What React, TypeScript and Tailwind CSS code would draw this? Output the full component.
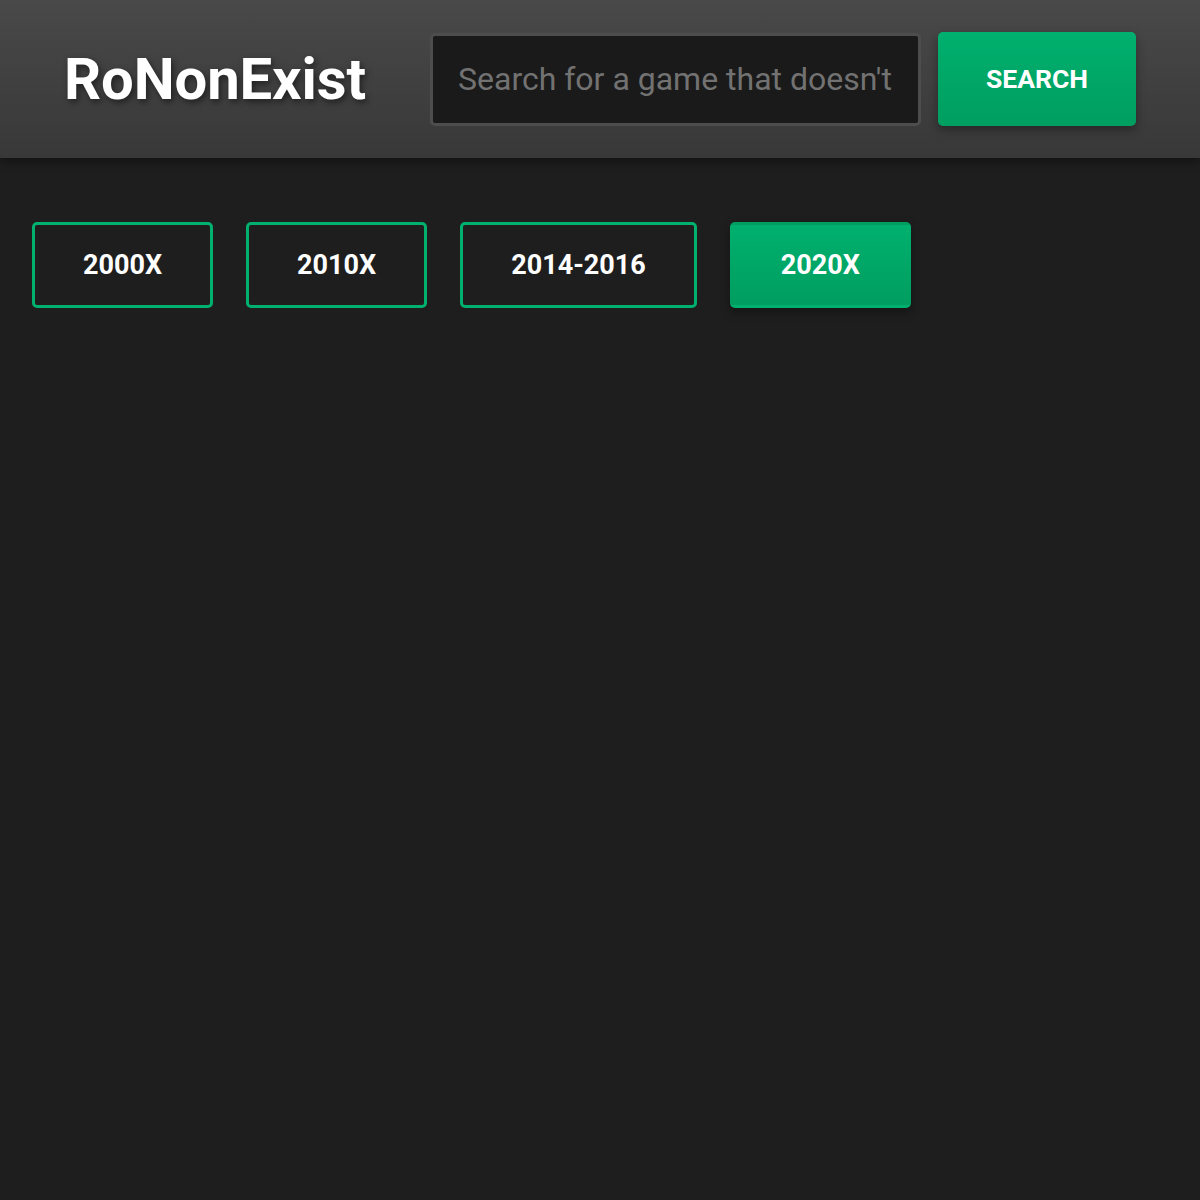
import { useState } from 'react';

const ranges = ['2000X', '2010X', '2014-2016', '2020X'];

export default function App() {
  const [active, setActive] = useState('2020X');
  const [query, setQuery] = useState('');

  return (
    <div className="min-h-screen bg-[#1e1e1e] font-['Roboto',sans-serif] text-white">
      <header className="relative flex h-[158px] items-center justify-between bg-gradient-to-b from-[#494949] to-[#383838] px-16 shadow-[0_3px_10px_rgba(0,0,0,0.45)]">
        <h1 className="text-[58px] leading-none font-bold tracking-[-0.1px] [text-shadow:2px_3px_6px_rgba(0,0,0,0.5)]">
          RoNonExist
        </h1>
        <div className="flex items-center gap-[17px]">
          <input
            value={query}
            onChange={(e) => setQuery(e.target.value)}
            placeholder="Search for a game that doesn't exist..."
            className="h-[93px] w-[491px] rounded-[5px] border-[3px] border-[#4d4d4d] bg-[#1a1a1a] px-[25px] text-[32px] text-white outline-none placeholder:text-[#727272]"
          />
          <button className="h-[94px] w-[198px] rounded-[5px] bg-gradient-to-b from-[#00b06e] to-[#009e60] text-[26.5px] font-bold text-white shadow-[0_4px_10px_rgba(0,0,0,0.35)]">
            SEARCH
          </button>
        </div>
      </header>

      <main className="flex gap-[33px] px-8 pt-16">
        {ranges.map((r) => (
          <button
            key={r}
            onClick={() => setActive(r)}
            className={
              r === active
                ? 'h-[86px] rounded-[5px] border-[3px] border-transparent bg-gradient-to-b from-[#00b06e] to-[#009e60] px-12 text-[27px] font-bold text-white shadow-[0_4px_10px_rgba(0,0,0,0.35)]'
                : 'h-[86px] rounded-[5px] border-[3px] border-[#00b06e] bg-[#1e1e1e] px-12 text-[27px] font-bold text-white'
            }
          >
            {r}
          </button>
        ))}
      </main>
    </div>
  );
}
